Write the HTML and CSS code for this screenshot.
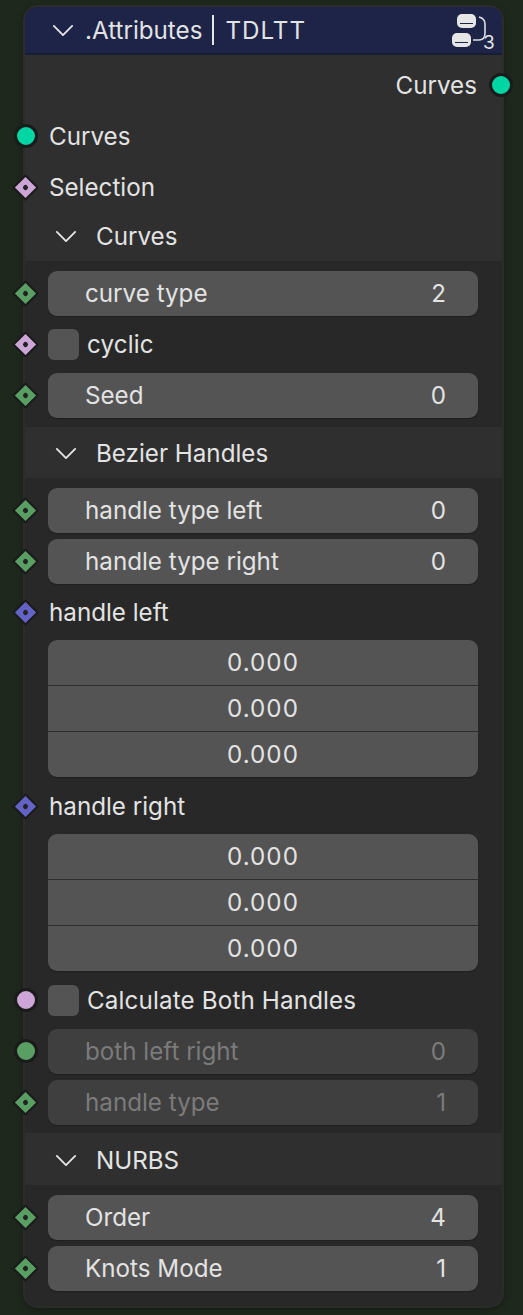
FILE: index.html
```html
<!DOCTYPE html>
<html lang="en">
<head>
<meta charset="utf-8">
<title>.Attributes | TDLTT</title>
<link rel="stylesheet" href="styles.css">
</head>
<body>
<svg class="defs" width="0" height="0" aria-hidden="true">
  <symbol id="chev" viewBox="0 0 24 14"><path d="M2 2 L12 12 L22 2" fill="none" stroke="currentColor" stroke-width="2" stroke-linecap="round" stroke-linejoin="round"/></symbol>
</svg>
<main class="node">
  <header class="node-head">
    <svg class="chev"><use href="#chev"/></svg>
    <span class="node-title">.Attributes</span><span class="node-sep"></span><span class="node-title node-title-wide">TDLTT</span>
    <svg class="group-icon" viewBox="0 0 48 40" width="48" height="40">
      <rect x="7" y="2" width="19" height="14" rx="5" fill="#e6e6e6"/>
      <rect x="2" y="21" width="19" height="14" rx="5" fill="#e6e6e6"/>
      <path d="M10 11.500H23M5 30.500H18" stroke="#1d2448" stroke-width="1.200"/>
      <path d="M29 5C33 6 35 8 35 12V21C35 25 33 28 29 28H23" fill="none" stroke="#dcdcdc" stroke-width="1.600"/>
      <text x="33" y="36.500" class="group-num">3</text>
    </svg>
  </header>
  <div class="node-body">
    <div class="row row-out"><span>Curves</span><i class="sock circle teal sock-right"></i></div>
    <div class="row"><i class="sock circle teal"></i><span class="label">Curves</span></div>
    <div class="row"><i class="sock diamond pink"></i><span class="label">Selection</span></div>

    <div class="panel-head panel-head-first"><svg class="chev small"><use href="#chev"/></svg><span>Curves</span></div>
    <section class="panel panel-a">
      <div class="row"><i class="sock diamond green"></i><div class="field"><span>curve type</span><span>2</span></div></div>
      <div class="row"><i class="sock diamond pink"></i><div class="check"></div><span class="check-label">cyclic</span></div>
      <div class="row"><i class="sock diamond green"></i><div class="field"><span>Seed</span><span>0</span></div></div>
    </section>

    <div class="panel-head"><svg class="chev small"><use href="#chev"/></svg><span>Bezier Handles</span></div>
    <section class="panel panel-b">
      <div class="row"><i class="sock diamond green"></i><div class="field"><span>handle type left</span><span>0</span></div></div>
      <div class="row"><i class="sock diamond green"></i><div class="field"><span>handle type right</span><span>0</span></div></div>
      <div class="row"><i class="sock diamond blue"></i><span class="label">handle left</span></div>
      <div class="vector"><div>0.000</div><div>0.000</div><div>0.000</div></div>
      <div class="row"><i class="sock diamond blue"></i><span class="label">handle right</span></div>
      <div class="vector"><div>0.000</div><div>0.000</div><div>0.000</div></div>
      <div class="row"><i class="sock circle pink"></i><div class="check"></div><span class="check-label">Calculate Both Handles</span></div>
      <div class="row"><i class="sock circle green"></i><div class="field off"><span>both left right</span><span>0</span></div></div>
      <div class="row"><i class="sock diamond green"></i><div class="field off"><span>handle type</span><span>1</span></div></div>
    </section>

    <div class="panel-head panel-head-last"><svg class="chev small"><use href="#chev"/></svg><span>NURBS</span></div>
    <section class="panel panel-last">
      <div class="row"><i class="sock diamond green"></i><div class="field"><span>Order</span><span>4</span></div></div>
      <div class="row"><i class="sock diamond green"></i><div class="field"><span>Knots Mode</span><span>1</span></div></div>
    </section>
  </div>
</main>
</body>
</html>
```
FILE: styles.css
```css
* { box-sizing: border-box; }
html, body { margin: 0; height: 1315px; overflow: hidden; }
body {
  background: #1f281d;
  font-family: Inter, "Liberation Sans", sans-serif;
  font-size: 24.2px;
  color: #e3e3e3;
  padding: 5px 19px 0 23px;
}
.defs { position: absolute; }
.node {
  width: 481px;
  height: 1303px;
  background: #2f2f2f;
  border: 2px solid #2c2c2c;
  border-radius: 15px;
  box-shadow: 0 2px 6px rgba(0,0,0,.3);
  display: flex;
  flex-direction: column;
}
.node-head {
  height: 48px;
  flex: none;
  background: #1d2448;
  border-radius: 12px 12px 0 0;
  border-bottom: 2px solid #181d36;
  display: flex;
  align-items: center;
  padding-left: 27px;
  position: relative;
}
.chev { width: 22px; height: 13px; color: #e6e6e6; flex: none; margin-right: 11px; }
.chev.small { margin-right: 19px; }
.node-sep { width: 2px; height: 30px; background: #e6e6e6; margin: 0 11px 0 10px; }
.node-title-wide { letter-spacing: 1px; }
.group-icon { position: absolute; right: 4px; top: 5px; }
.group-num { font-family: Inter, sans-serif; font-size: 19px; fill: #e6e6e6; }
.node-body { flex: 1; display: flex; flex-direction: column; padding-top: 5px; }
.row {
  height: 51px;
  flex: none;
  display: flex;
  align-items: center;
  padding: 0 24px 1px 23px;
  position: relative;
}
.row-out { justify-content: flex-end; padding-right: 25px; }
.label { margin-left: 1px; }
.sock { position: absolute; top: 25px; display: block; }
.circle {
  width: 24px; height: 24px; margin-top: -12px;
  left: -11px;
  border-radius: 50%;
  border: 3px solid #1b1b1b;
}
.sock-right { left: auto; right: -11px; }
.diamond {
  width: 19px; height: 19px; margin-top: -9.500px;
  left: -9px;
  transform: rotate(45deg);
  border: 2px solid #1b1b1b;
  border-radius: 1px;
}
.diamond::after {
  content: "";
  position: absolute;
  left: 5px; top: 5px;
  width: 5px; height: 5px;
  border-radius: 50%;
  background: #222;
}
.teal { background: #00d6a3; }
.pink { background: #cca6d6; }
.green { background: #599e63; }
.blue { background: #6363c7; }
.panel-head {
  height: 51px;
  flex: none;
  display: flex;
  align-items: center;
  padding: 1px 0 0 30px;
  background: #2f2f2f;
}
.panel-head-first { margin-top: -3px; }
.panel-head-last { height: 52px; padding-top: 2px; }
.panel { background: #282828; padding-top: 7px; }
.panel-a { padding-bottom: 6px; }
.panel-b { padding-bottom: 5px; }
.panel-last { flex: 1; border-radius: 0 0 12px 12px; }
.field {
  flex: 1;
  height: 45px;
  background: #545454;
  border-radius: 9px;
  box-shadow: 0 1px 1px #1f1f1f;
  display: flex;
  align-items: center;
  justify-content: space-between;
  padding: 0 32px 0 37px;
}
.field.off { background: #3f3f3f; color: #7b7b7b; }
.check {
  width: 31px; height: 31px;
  background: #545454;
  border-radius: 6px;
  flex: none;
}
.check-label { margin-left: 8px; letter-spacing: 0.150px; }
.vector {
  margin: 2px 24px 4px 23px;
  background: #545454;
  border-radius: 9px;
  box-shadow: 0 1px 1px #1f1f1f;
  display: flex;
  flex-direction: column;
  letter-spacing: 1px;
}
.vector div {
  height: 46px;
  display: flex;
  align-items: center;
  justify-content: center;
}
.vector div:first-child { height: 45px; }
.vector div + div { border-top: 1px solid #2e2e2e; }
```
